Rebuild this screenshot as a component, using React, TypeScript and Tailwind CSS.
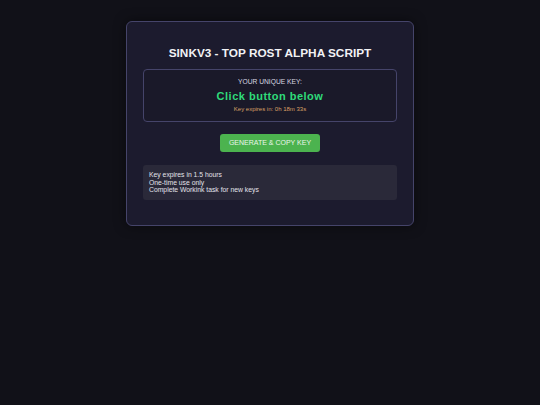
export default function App() {
  return (
    <div className="min-h-screen bg-[#111118] pt-[21px] font-['Liberation_Sans',Arial,sans-serif]">
      <div className="mx-auto w-[288px] rounded-[6px] border border-[#45446a] bg-[#1c1b2e] px-[16px] pt-[24px] pb-[25px] shadow-[0_0_12px_rgba(0,0,0,0.5)]">
        {/* Header */}
        <h1 className="mb-[8px] text-center text-[11.8px] font-bold leading-[15px] text-[#f2f2f5]">
          SINKV3 - TOP ROST ALPHA SCRIPT
        </h1>

        {/* Key box */}
        <div className="rounded-[4px] border border-[#45446a] bg-[#1a1929] pt-[7px] pb-[8px] text-center">
          <p className="text-[6.7px] leading-[9px] text-[#d8d8e0]">YOUR UNIQUE KEY:</p>
          <p className="mt-[3px] text-[11px] font-bold leading-[14px] tracking-[0.5px] text-[#2fdc7a]">
            Click button below
          </p>
          <p className="mt-[3px] text-[6px] leading-[7px] text-[#d9a066]">
            Key expires in: 0h 18m 33s
          </p>
        </div>

        {/* Action */}
        <div className="mt-[12px] flex justify-center">
          <button className="h-[18px] w-[100px] rounded-[3px] bg-[#4cb34f] text-[7px] leading-[18px] text-[#eaf5ea]">
            GENERATE &amp; COPY KEY
          </button>
        </div>

        {/* Info */}
        <div className="mt-[13px] rounded-[3px] bg-[#2a2939] px-[6px] py-[6px] text-[6.8px] leading-[7.7px] text-[#e2e2ea]">
          <p>Key expires in 1.5 hours</p>
          <p>One-time use only</p>
          <p>Complete Workink task for new keys</p>
        </div>
      </div>
    </div>
  );
}
